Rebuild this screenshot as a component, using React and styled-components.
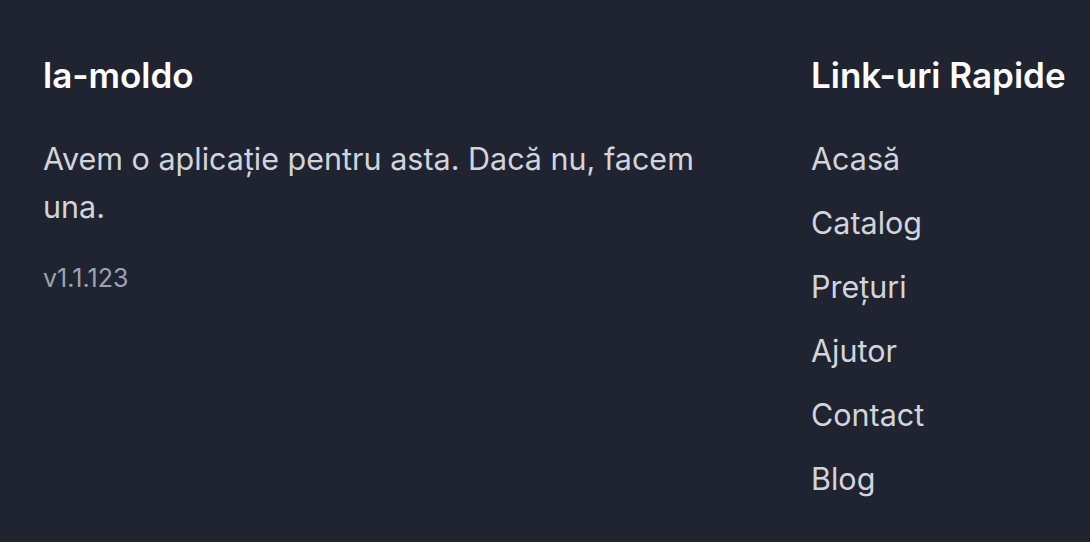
import React from "react";
import styled, { createGlobalStyle } from "styled-components";

const GlobalStyle = createGlobalStyle`
  html, body {
    margin: 0;
    padding: 0;
    background: #1f2430;
  }
  body {
    font-family: Inter, "Noto Sans", "Liberation Sans", sans-serif;
    -webkit-font-smoothing: antialiased;
  }
`;

const Footer = styled.footer`
  box-sizing: border-box;
  width: 1090px;
  height: 542px;
  background: #1f2430;
  padding: 55px 0 0 43px;
  display: flex;
`;

const About = styled.section`
  width: 768px;
  display: flex;
  flex-direction: column;
`;

const Links = styled.nav`
  display: flex;
  flex-direction: column;
`;

const Heading = styled.h2`
  margin: 0 0 40px;
  font-size: 35px;
  line-height: 40px;
  font-weight: 600;
  color: #ffffff;
  white-space: nowrap;
`;

const Blurb = styled.p`
  margin: 0;
  max-width: 700px;
  font-size: 30.5px;
  line-height: 48px;
  color: #d1d5db;
`;

const Version = styled.span`
  margin-top: 31px;
  font-size: 25px;
  line-height: 32px;
  color: #9ca3af;
`;

const LinkList = styled.ul`
  list-style: none;
  margin: 0;
  padding: 0;
  display: flex;
  flex-direction: column;
  gap: 16px;
`;

const LinkItem = styled.li`
  font-size: 30.5px;
  line-height: 48px;
`;

const QuickLink = styled.a`
  color: #d1d5db;
  text-decoration: none;
`;

const quickLinks = ["Acasă", "Catalog", "Prețuri", "Ajutor", "Contact", "Blog"];

export default function App() {
  return (
    <>
      <GlobalStyle />
      <Footer>
        <About>
          <Heading>la-moldo</Heading>
          <Blurb>Avem o aplicație pentru asta. Dacă nu, facem una.</Blurb>
          <Version>v1.1.123</Version>
        </About>
        <Links>
          <Heading>Link-uri Rapide</Heading>
          <LinkList>
            {quickLinks.map((label) => (
              <LinkItem key={label}>
                <QuickLink href="#">{label}</QuickLink>
              </LinkItem>
            ))}
          </LinkList>
        </Links>
      </Footer>
    </>
  );
}
